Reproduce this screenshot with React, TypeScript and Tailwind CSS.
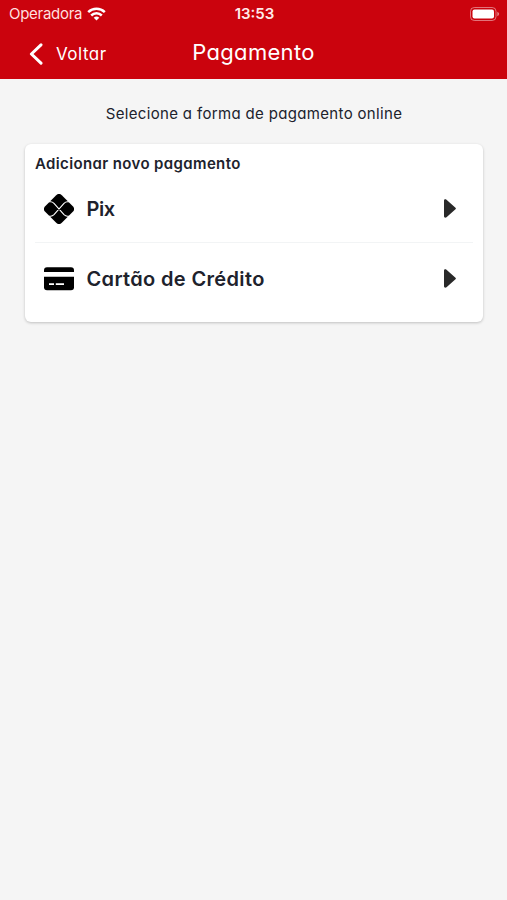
import React from 'react';

function WifiIcon() {
  return (
    <svg width="19" height="14" viewBox="0 0 19 14" fill="none" stroke="#fff" strokeWidth="2.5">
      <path d="M1.2 5.1a12 12 0 0 1 16.6 0" />
      <path d="M4.2 8.5a7.6 7.6 0 0 1 10.6 0" />
      <path d="M9.5 13.6 6.7 10.8a4 4 0 0 1 5.6 0z" fill="#fff" stroke="none" />
    </svg>
  );
}

function BatteryIcon() {
  return (
    <svg width="30" height="14" viewBox="0 0 30 14" fill="none">
      <rect x="0.5" y="0.5" width="25.5" height="13" rx="3.8" stroke="#fff" strokeOpacity="0.45" />
      <rect x="2.5" y="2.5" width="21.5" height="9" rx="2" fill="#fff" />
      <path d="M27.3 4.8c2.4.8 2.4 3.6 0 4.4z" fill="#fff" fillOpacity="0.5" />
    </svg>
  );
}

function PixIcon() {
  return (
    <svg width="30" height="30" viewBox="0 0 30 30">
      <path d="M12.2 1.2a4 4 0 0 1 5.6 0L28.8 12.2a4 4 0 0 1 0 5.6L17.8 28.8a4 4 0 0 1-5.6 0L1.2 17.8a4 4 0 0 1 0-5.6z" />
      <path
        d="M5 7.8H6.6C8 7.8 9 8.4 10 9.4L20 20.6C21 21.6 22 22.2 23.4 22.2H25M25 7.8H23.4C22 7.8 21 8.4 20 9.4L10 20.6C9 21.6 8 22.2 6.6 22.2H5"
        fill="none"
        stroke="#fff"
        strokeWidth="1.1"
      />
    </svg>
  );
}

function CardIcon() {
  return (
    <svg width="30" height="24" viewBox="0 0 30 24">
      <path d="M0 5V3.2A3 3 0 0 1 3 .2H27a3 3 0 0 1 3 3V5z" />
      <path d="M0 9.8H30V20.2a3 3 0 0 1-3 3H3a3 3 0 0 1-3-3z" />
      <path d="M5 17.2H10M11.8 17.2H20" stroke="#fff" strokeWidth="1.7" />
    </svg>
  );
}

function ArrowIcon() {
  return (
    <svg width="12" height="19" viewBox="0 0 12 19" fill="#292929">
      <path d="M0 1.7C0 .3 1.5-.1 2.5.8L11.2 8.4a1.4 1.4 0 0 1 0 2.2L2.5 18.2C1.5 19.1 0 18.7 0 17.3z" />
    </svg>
  );
}

type OptionProps = {
  icon: React.ReactNode;
  label: string;
  className: string;
};

function PaymentOption({ icon, label, className }: OptionProps) {
  return (
    <button className={`flex w-full items-center pl-[9px] pr-[17px] ${className}`}>
      {icon}
      <span className="ml-[12.5px] whitespace-nowrap">{label}</span>
      <span className="ml-auto">
        <ArrowIcon />
      </span>
    </button>
  );
}

export default function App() {
  return (
    <div className="h-[900px] w-[507px] overflow-hidden bg-[#f5f5f5] font-[Inter,sans-serif] text-[#20222c] [font-feature-settings:'cv11']">
      <header className="h-[79px] bg-[#cb030d] text-white">
        <div className="grid h-7 grid-cols-3 items-center pl-[9px] pr-[7px]">
          <div className="flex items-center gap-[5px] text-[15px] tracking-[-0.28px] text-[#ffdfdf] [font-feature-settings:normal]">
            <span>Operadora</span>
            <WifiIcon />
          </div>
          <div className="text-center text-[15px] font-semibold text-[#ffeaea]">13:53</div>
          <div className="flex justify-end">
            <BatteryIcon />
          </div>
        </div>
        <div className="grid h-[51px] grid-cols-3 items-center">
          <button className="flex items-center pl-[29px] text-[17px] tracking-[0.5px]">
            <svg width="14" height="22" viewBox="0 0 14 22" fill="none" stroke="#fff" strokeWidth="3" strokeLinecap="round" strokeLinejoin="round">
              <path d="M12 1.8 2.4 11 12 20.2" />
            </svg>
            <span className="ml-[13px] pt-0.5">Voltar</span>
          </button>
          <h1 className="pb-0.5 text-center text-[22px] tracking-[0.3px]">Pagamento</h1>
        </div>
      </header>

      <main className="pl-[25px] pr-6">
        <p className="flex h-[65px] items-center justify-center whitespace-nowrap pt-1.5 text-[15px] tracking-[0.34px]">
          Selecione a forma de pagamento online
        </p>
        <section className="h-[178px] rounded-md bg-white px-[10px] pt-[9px] shadow-[0_1px_3px_rgba(0,0,0,0.22)]">
          <h2 className="h-[22px] text-[15px] font-semibold leading-[22px] tracking-[0.37px]">Adicionar novo pagamento</h2>
          <div className="divide-y divide-[#f2f4f5] text-[20px] font-semibold">
            <PaymentOption icon={<PixIcon />} label="Pix" className="h-[68px] tracking-[-0.5px]" />
            <PaymentOption icon={<CardIcon />} label="Cartão de Crédito" className="h-[71px] tracking-[0.35px]" />
          </div>
        </section>
      </main>
    </div>
  );
}
